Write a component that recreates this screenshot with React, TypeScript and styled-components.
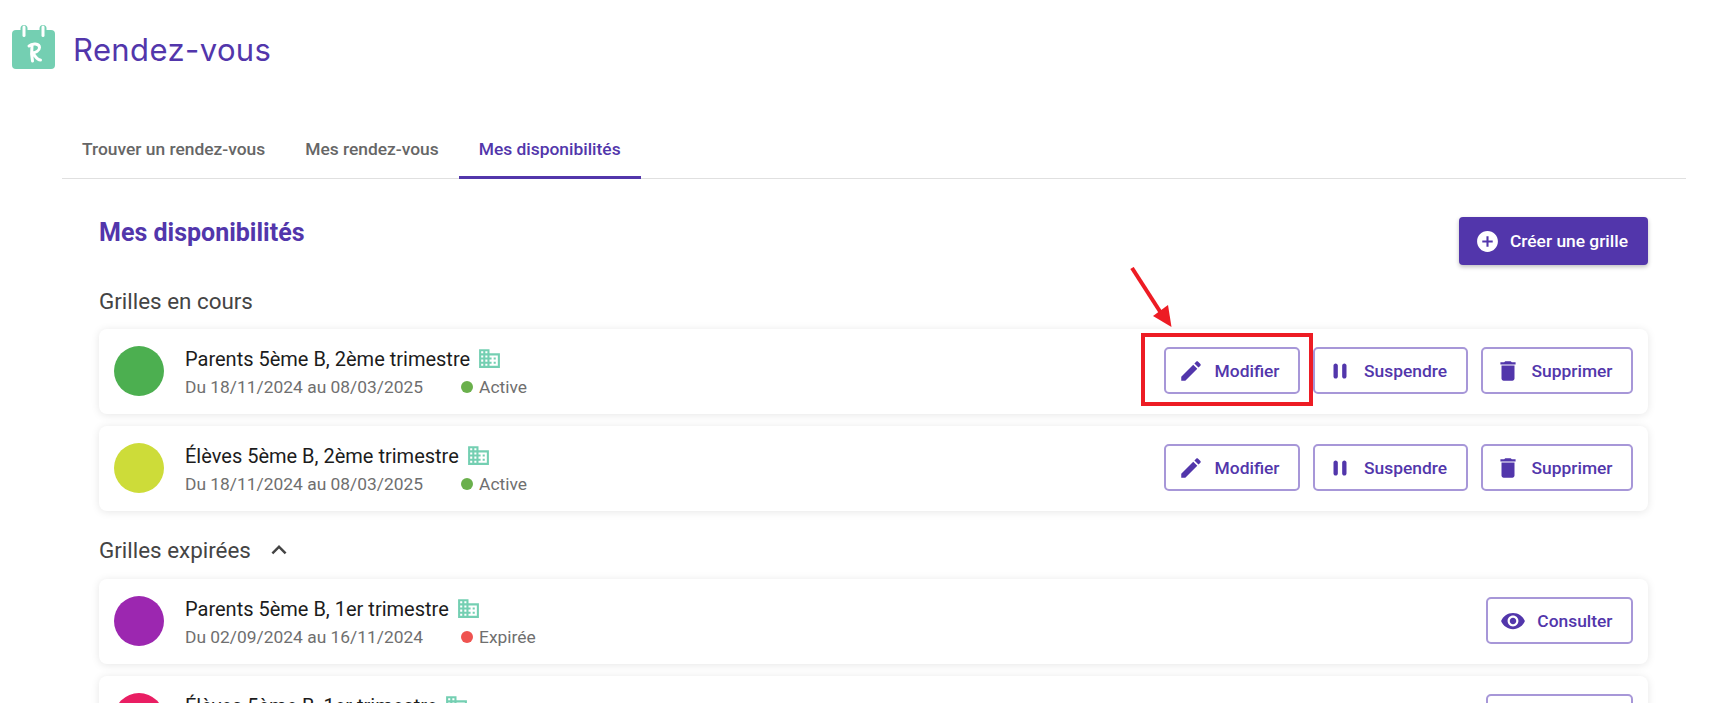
import React from 'react';
import styled, { createGlobalStyle } from 'styled-components';

const PURPLE = '#5236ab';
const TEAL = '#74cfb2';

const GlobalStyle = createGlobalStyle`
  html, body {
    margin: 0;
    height: 703px;
    overflow: hidden;
    background: #fff;
    font-family: Roboto, 'Liberation Sans', sans-serif;
  }
`;

type IconProps = { d: string; size?: number; color?: string };

function Icon({ d, size = 26, color = 'currentColor' }: IconProps) {
  return (
    <svg width={size} height={size} viewBox="0 0 24 24" fill={color} style={{ flex: 'none' }}>
      <path d={d} />
    </svg>
  );
}

const paths = {
  edit: 'M3 17.25V21h3.75L17.81 9.94l-3.75-3.75L3 17.25zM20.71 7.04c.39-.39.39-1.02 0-1.41l-2.34-2.34c-.39-.39-1.02-.39-1.41 0l-1.83 1.83 3.75 3.75 1.83-1.83z',
  pause: 'M8 19c1.1 0 2-.9 2-2V7c0-1.1-.9-2-2-2s-2 .9-2 2v10c0 1.1.9 2 2 2zm6-12v10c0 1.1.9 2 2 2s2-.9 2-2V7c0-1.1-.9-2-2-2s-2 .9-2 2z',
  trash: 'M6 19c0 1.1.9 2 2 2h8c1.1 0 2-.9 2-2V7H6v12zM19 4h-3.5l-1-1h-5l-1 1H5v2h14V4z',
  eye: 'M12 4.5C7 4.5 2.73 7.61 1 12c1.73 4.39 6 7.5 11 7.5s9.27-3.11 11-7.5c-1.73-4.39-6-7.5-11-7.5zM12 17c-2.76 0-5-2.24-5-5s2.24-5 5-5 5 2.24 5 5-2.24 5-5 5zm0-8c-1.66 0-3 1.34-3 3s1.34 3 3 3 3-1.34 3-3-1.34-3-3-3z',
  add: 'M12 2C6.48 2 2 6.48 2 12s4.48 10 10 10 10-4.48 10-10S17.52 2 12 2zm5 11h-4v4h-2v-4H7v-2h4V7h2v4h4v2z',
  domain: 'M12 7V3H2v18h20V7H12zM6 19H4v-2h2v2zm0-4H4v-2h2v2zm0-4H4V9h2v2zm0-4H4V5h2v2zm4 12H8v-2h2v2zm0-4H8v-2h2v2zm0-4H8V9h2v2zm0-4H8V5h2v2zm10 12h-8v-2h2v-2h-2v-2h2v-2h-2V9h8v10zm-2-8h-2v2h2v-2zm0 4h-2v2h2v-2z',
  chevron: 'M12 8l-6 6 1.41 1.41L12 10.83l4.59 4.58L18 14z',
};

function Logo() {
  return (
    <svg width="44" height="44" viewBox="0 0 44 44" style={{ flex: 'none' }}>
      <rect x="0" y="5" width="43" height="39" rx="4" fill={TEAL} />
      <rect x="8.5" y="0" width="7" height="14" rx="3.5" fill={TEAL} />
      <rect x="27.5" y="0" width="7" height="14" rx="3.5" fill={TEAL} />
      <rect x="10.5" y="0.5" width="3" height="11.5" rx="1.5" fill="#fff" />
      <rect x="29.5" y="0.5" width="3" height="11.5" rx="1.5" fill="#fff" />
      <path
        d="M17 21c3-3 10.500-3 10.500 1.500 0 3-4 5-7 5.500 2 1.500 4 7 8 7M20 21c-.5 4-.5 10 .5 15"
        fill="none"
        stroke="#fff"
        strokeWidth="3"
        strokeLinecap="round"
        strokeLinejoin="round"
      />
    </svg>
  );
}

type GridRow = {
  title: string;
  dates: string;
  status: string;
  circle: string;
  expired?: boolean;
};

const current: GridRow[] = [
  { title: 'Parents 5ème B, 2ème trimestre', dates: 'Du 18/11/2024 au 08/03/2025', status: 'Active', circle: '#4caf50' },
  { title: 'Élèves 5ème B, 2ème trimestre', dates: 'Du 18/11/2024 au 08/03/2025', status: 'Active', circle: '#cddc39' },
];

const expired: GridRow[] = [
  { title: 'Parents 5ème B, 1er trimestre', dates: 'Du 02/09/2024 au 16/11/2024', status: 'Expirée', circle: '#9c27b0', expired: true },
  { title: 'Élèves 5ème B, 1er trimestre', dates: 'Du 02/09/2024 au 16/11/2024', status: 'Expirée', circle: '#e91e63', expired: true },
];

function Row({ row }: { row: GridRow }) {
  return (
    <Card>
      <Circle $color={row.circle} />
      <CardText>
        <CardTitle>
          {row.title}
          <Icon d={paths.domain} size={25} color={TEAL} />
        </CardTitle>
        <CardMeta>
          <span>{row.dates}</span>
          <Status>
            <Dot $expired={row.expired} />
            {row.status}
          </Status>
        </CardMeta>
      </CardText>
      <Actions>
        {row.expired ? (
          <OutlineButton>
            <Icon d={paths.eye} />
            Consulter
          </OutlineButton>
        ) : (
          <>
            <OutlineButton>
              <Icon d={paths.edit} />
              Modifier
            </OutlineButton>
            <OutlineButton>
              <Icon d={paths.pause} />
              Suspendre
            </OutlineButton>
            <OutlineButton>
              <Icon d={paths.trash} />
              Supprimer
            </OutlineButton>
          </>
        )}
      </Actions>
    </Card>
  );
}

export default function App() {
  return (
    <Page>
      <GlobalStyle />
      <Header>
        <Logo />
        <AppName>Rendez-vous</AppName>
      </Header>
      <Tabs>
        <Tab>Trouver un rendez-vous</Tab>
        <Tab>Mes rendez-vous</Tab>
        <Tab $active>Mes disponibilités</Tab>
      </Tabs>
      <Content>
        <TitleRow>
          <Heading>Mes disponibilités</Heading>
          <PrimaryButton>
            <Icon d={paths.add} size={25} />
            Créer une grille
          </PrimaryButton>
        </TitleRow>
        <SectionLabel>Grilles en cours</SectionLabel>
        <CardList>
          {current.map((row) => (
            <Row key={row.title} row={row} />
          ))}
        </CardList>
        <SectionLabel $second>
          Grilles expirées
          <Icon d={paths.chevron} size={30} color="#444" />
        </SectionLabel>
        <CardList>
          {expired.map((row) => (
            <Row key={row.title} row={row} />
          ))}
        </CardList>
      </Content>
      <Highlight />
      <Arrow width="48" height="64" viewBox="0 0 48 64">
        <line x1="2" y1="1" x2="31" y2="46" stroke="#ed1c24" strokeWidth="4" />
        <polygon points="41.500,60 23,49 38,38" fill="#ed1c24" />
      </Arrow>
    </Page>
  );
}

const Page = styled.div`
  position: relative;
  width: 1724px;
  height: 703px;
  overflow: hidden;
`;

const Header = styled.header`
  display: flex;
  align-items: center;
  gap: 17px;
  height: 118px;
  box-sizing: border-box;
  padding: 25px 0 50px 12px;
`;

const AppName = styled.div`
  padding-top: 7px;
  font-family: Inter, sans-serif;
  font-size: 31px;
  font-weight: 400;
  line-height: 44px;
  letter-spacing: 0.4px;
  color: ${PURPLE};
`;

const Tabs = styled.nav`
  display: flex;
  margin: 0 38px 0 62px;
  border-bottom: 1px solid #e0e0e0;
`;

const Tab = styled.div<{ $active?: boolean }>`
  height: 61px;
  box-sizing: border-box;
  margin-bottom: -1px;
  padding: 4px 20px 0;
  display: flex;
  align-items: center;
  font-size: 17.4px;
  font-weight: 500;
  color: ${({ $active }) => ($active ? PURPLE : '#666')};
  border-bottom: 3px solid ${({ $active }) => ($active ? PURPLE : 'transparent')};
`;

const Content = styled.main`
  padding: 38px 76px 0 99px;
`;

const TitleRow = styled.div`
  display: flex;
  justify-content: space-between;
  align-items: flex-start;
`;

const Heading = styled.h1`
  margin: 1px 0 0;
  font-size: 25px;
  line-height: 30px;
  font-weight: 700;
  color: ${PURPLE};
`;

const PrimaryButton = styled.button`
  display: flex;
  align-items: center;
  gap: 10px;
  height: 48px;
  padding: 0 20px 0 16px;
  border: none;
  border-radius: 4px;
  background: ${PURPLE};
  color: #fff;
  font-family: inherit;
  font-size: 17.4px;
  font-weight: 500;
  box-shadow: 0 2px 4px rgba(0, 0, 0, 0.25);
`;

const SectionLabel = styled.h2<{ $second?: boolean }>`
  display: flex;
  align-items: center;
  gap: 13px;
  height: 24px;
  margin: ${({ $second }) => ($second ? '27px 0 17px' : '24px 0 16px')};
  font-size: 22.4px;
  line-height: 28px;
  font-weight: 400;
  color: #444;
`;

const CardList = styled.div`
  display: flex;
  flex-direction: column;
  gap: 12px;
`;

const Card = styled.article`
  display: flex;
  align-items: center;
  flex: none;
  height: 85px;
  box-sizing: border-box;
  padding: 0 15px;
  border-radius: 8px;
  background: #fff;
  box-shadow: 0 1px 8px rgba(0, 0, 0, 0.1);
`;

const Circle = styled.div<{ $color: string }>`
  flex: none;
  width: 50px;
  height: 50px;
  margin: 0 21px 1px 0;
  border-radius: 50%;
  background: ${({ $color }) => $color};
`;

const CardText = styled.div`
  display: flex;
  flex-direction: column;
  gap: 2px;
`;

const CardTitle = styled.div`
  display: flex;
  align-items: center;
  gap: 7px;
  height: 28px;
  font-size: 20px;
  color: #1c1c1c;
`;

const CardMeta = styled.div`
  display: flex;
  align-items: center;
  gap: 38px;
  height: 24px;
  font-size: 17.4px;
  color: #6f6f6f;
`;

const Status = styled.span`
  display: flex;
  align-items: center;
  gap: 6px;
`;

const Dot = styled.i<{ $expired?: boolean }>`
  width: 12px;
  height: 12px;
  border-radius: 50%;
  background: ${({ $expired }) => ($expired ? '#ef5350' : '#6ab04c')};
`;

const Actions = styled.div`
  display: flex;
  gap: 13px;
  margin: 0 0 2px auto;
`;

const OutlineButton = styled.button`
  display: flex;
  align-items: center;
  gap: 11px;
  height: 47px;
  box-sizing: border-box;
  padding: 0 18.5px 0 12px;
  border: 2px solid #a797d8;
  border-radius: 5px;
  background: #fff;
  color: ${PURPLE};
  font-family: inherit;
  font-size: 17.4px;
  font-weight: 500;
`;

const Highlight = styled.div`
  position: absolute;
  left: 1141px;
  top: 333px;
  width: 172px;
  height: 73px;
  box-sizing: border-box;
  border: 4px solid #ed1c24;
`;

const Arrow = styled.svg`
  position: absolute;
  left: 1130px;
  top: 267px;
`;
